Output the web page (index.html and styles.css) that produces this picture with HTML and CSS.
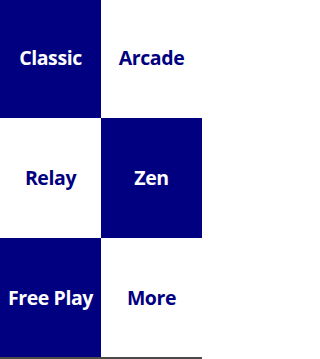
FILE: index.html
```html
<!DOCTYPE html>
<html lang="en">
<head>
<meta charset="utf-8">
<title>Modes</title>
<link rel="stylesheet" href="styles.css">
</head>
<body>
<main class="board">
  <div class="tile dark top"><span class="label">Classic</span></div>
  <div class="tile light top"><span class="label">Arcade</span></div>
  <div class="tile light"><span class="label">Relay</span></div>
  <div class="tile dark"><span class="label">Zen</span></div>
  <div class="tile dark"><span class="label">Free Play</span></div>
  <div class="tile light"><span class="label">More</span></div>
</main>
</body>
</html>
```
FILE: styles.css
```css
html, body {
  margin: 0;
  padding: 0;
  background: #ffffff;
}

body {
  width: 202px;
  height: 359px;
  overflow: hidden;
  font-family: "Open Sans", "Noto Sans", "DejaVu Sans", sans-serif;
}

.board {
  display: grid;
  grid-template-columns: 101px 101px;
  grid-template-rows: 118px 120px 119px;
  height: 357px;
  border-bottom: 2px solid #4b4b4b;
}

.tile {
  display: flex;
  align-items: center;
  justify-content: center;
}

.top {
  padding-bottom: 3px;
}

.dark {
  background: #000080;
  color: #ffffff;
}

.light {
  background: #ffffff;
  color: #000080;
}

.label {
  font-size: 19.5px;
  font-weight: 700;
  line-height: 1;
  white-space: nowrap;
  letter-spacing: -0.4px;
}
```
